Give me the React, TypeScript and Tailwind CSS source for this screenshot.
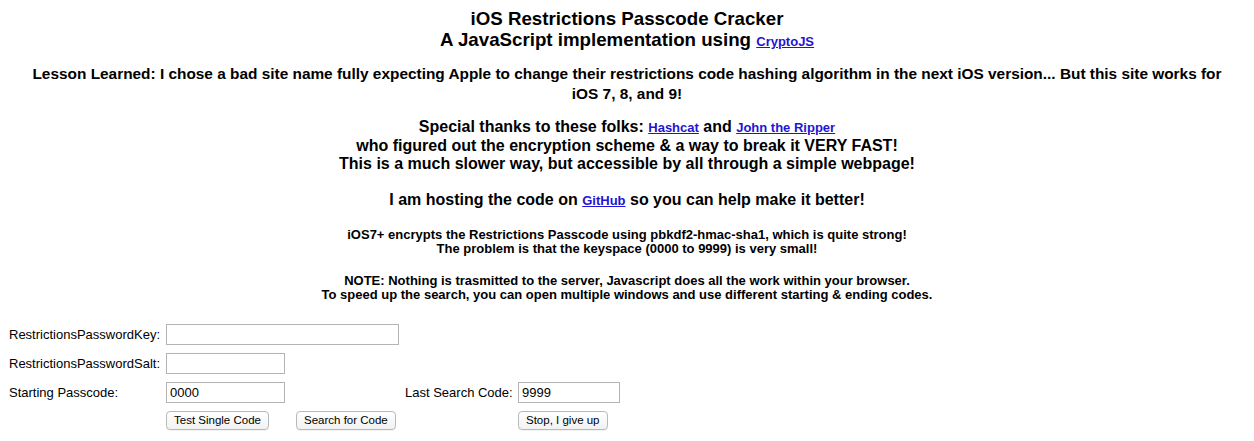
const linkCls = "text-[13px] text-[#2314d4] underline";

function Field({ w, value }: { w: string; value?: string }) {
  return (
    <input
      type="text"
      defaultValue={value}
      className={`${w} h-[21px] border border-[#b4b4b4] bg-white px-[3px] text-[13px] text-black outline-none`}
    />
  );
}

function Btn({ children }: { children: string }) {
  return (
    <button className="h-[19px] rounded-[4px] border border-[#b9b9b9] bg-gradient-to-b from-white to-[#f2f2f2] px-[7px] text-[11.5px] leading-none text-black shadow-[0_1px_0_rgba(0,0,0,0.05)]">
      {children}
    </button>
  );
}

export default function App() {
  return (
    <div className="min-h-[441px] bg-white font-['Liberation_Sans',Arial,sans-serif] text-black">
      <div className="flex flex-col items-center pt-[8px] text-center font-bold">
        {/* header */}
        <div className="text-[18.72px] leading-[21px]">
          <div>iOS Restrictions Passcode Cracker</div>
          <div>
            A JavaScript implementation using <a className={linkCls}>CryptoJS</a>
          </div>
        </div>

        <div className="mt-[12px] whitespace-nowrap text-[15.4px] leading-[20px]">
          Lesson Learned: I chose a bad site name fully expecting Apple to change their restrictions code hashing
          algorithm in the next iOS version... But this site works for
          <br />
          iOS 7, 8, and 9!
        </div>

        <div className="mt-[14px] text-[16px] leading-[18px]">
          <div>
            Special thanks to these folks: <a className={linkCls}>Hashcat</a> and{" "}
            <a className={linkCls}>John the Ripper</a>
          </div>
          <div>who figured out the encryption scheme &amp; a way to break it VERY FAST!</div>
          <div>This is a much slower way, but accessible by all through a simple webpage!</div>
        </div>

        <div className="mt-[18px] text-[16px] leading-[18px]">
          I am hosting the code on <a className={linkCls}>GitHub</a> so you can help make it better!
        </div>

        <div className="mt-[18px] text-[13px] leading-[14px]">
          <div>iOS7+ encrypts the Restrictions Passcode using pbkdf2-hmac-sha1, which is quite strong!</div>
          <div>The problem is that the keyspace (0000 to 9999) is very small!</div>
        </div>

        <div className="mt-[18px] text-[13px] leading-[14px]">
          <div>NOTE: Nothing is trasmitted to the server, Javascript does all the work within your browser.</div>
          <div>To speed up the search, you can open multiple windows and use different starting &amp; ending codes.</div>
        </div>
      </div>

      {/* form */}
      <div className="mt-[22px] grid grid-cols-[157px_130px_109px_113px_auto] items-center gap-y-[8px] pl-[9px] text-[13px]">
        <span>RestrictionsPasswordKey:</span>
        <div className="col-span-4">
          <Field w="w-[233px]" />
        </div>

        <span>RestrictionsPasswordSalt:</span>
        <div className="col-span-4">
          <Field w="w-[119px]" />
        </div>

        <span>Starting Passcode:</span>
        <div className="col-span-2">
          <Field w="w-[119px]" value="0000" />
        </div>
        <span>Last Search Code:</span>
        <div>
          <Field w="w-[102px]" value="9999" />
        </div>

        <span />
        <div className="-mt-[1px]">
          <Btn>Test Single Code</Btn>
        </div>
        <div className="col-span-2 -mt-[1px]">
          <Btn>Search for Code</Btn>
        </div>
        <div className="-mt-[1px]">
          <Btn>Stop, I give up</Btn>
        </div>
      </div>
    </div>
  );
}
